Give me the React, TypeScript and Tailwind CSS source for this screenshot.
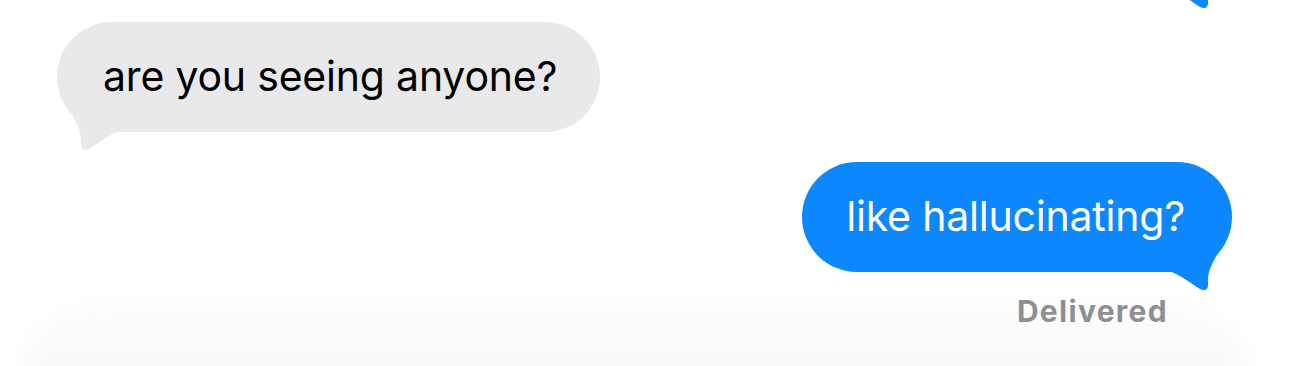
import React from "react";

const Tail = ({ color, flip }: { color: string; flip?: boolean }) => (
  <svg
    width="70"
    height="75"
    viewBox="0 0 70 75"
    className={`absolute top-[58px] ${flip ? "right-0 -scale-x-100" : "left-0"}`}
  >
    <path
      d="M4 10 C 12 34, 25 46, 24 62 Q 23 73, 32 69 C 42 63, 50 55, 66 50 L 66 10 Z"
      fill={color}
    />
  </svg>
);

const Bubble = ({ text, me }: { text: string; me?: boolean }) => (
  <div className={`relative ${me ? "self-end" : "self-start"}`}>
    <Tail color={me ? "#0d87fe" : "#e9e9eb"} flip={me} />
    <div
      className={`relative h-[110px] rounded-[55px] flex items-center text-[41px] tracking-[-0.2px] ${
        me ? "bg-[#0d87fe] text-white pl-[44px] pr-[47px]" : "bg-[#e9e9eb] text-black pl-[46px] pr-[43px]"
      }`}
    >
      {text}
    </div>
  </div>
);

export default function App() {
  return (
    <div className="relative w-[1290px] h-[366px] bg-white overflow-hidden font-['Inter','Noto_Sans',sans-serif]">
      <div className="absolute left-[20px] right-[40px] -bottom-[20px] h-[80px] rounded-t-[80px] bg-gradient-to-b from-[#fcfcfc] to-[#f9f9f9] blur-[10px]" />
      <div className="relative z-10 flex flex-col pl-[57px] pr-[58px]">
        <div className="self-end relative -mt-[120px] w-[430px]">
          <Tail color="#0d87fe" flip />
          <div className="relative h-[110px] rounded-[55px] bg-[#0d87fe]" />
        </div>
        <div className="mt-[32px] flex flex-col">
          <Bubble text="are you seeing anyone?" />
        </div>
        <div className="mt-[30px] flex flex-col">
          <Bubble text="like hallucinating?" me />
        </div>
        <div className="self-end mr-[64px] mt-[22px] text-[30px] leading-[34px] font-bold tracking-[1.3px] text-[#8e8e93]">
          Delivered
        </div>
      </div>
    </div>
  );
}
